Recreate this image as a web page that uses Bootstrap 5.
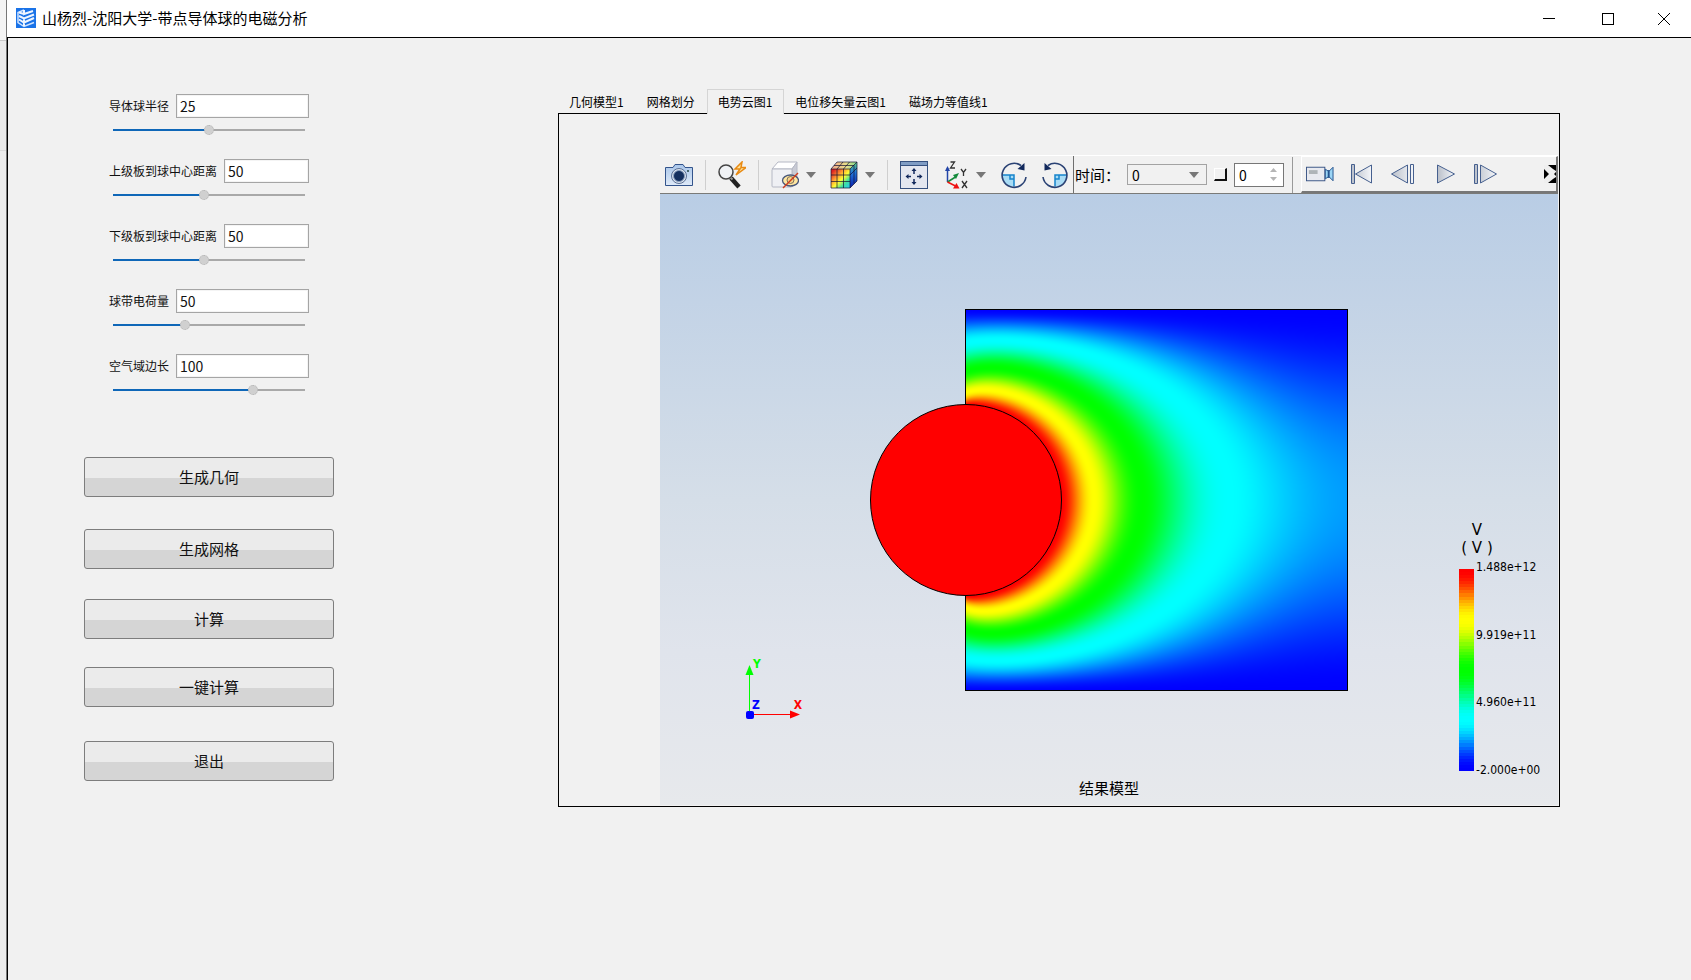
<!DOCTYPE html>
<html lang="zh-CN">
<head>
<meta charset="utf-8">
<meta name="viewport" content="width=device-width, initial-scale=1">
<title>山杨烈-沈阳大学-带点导体球的电磁分析</title>
<link href="https://cdn.jsdelivr.net/npm/bootstrap@5.3.0/dist/css/bootstrap.min.css" rel="stylesheet">
<style>
:root { --face: #f1f1f1; --cjk: "Noto Sans CJK SC", "Liberation Sans", sans-serif; }
body { font-family: var(--cjk); font-size: 15px; color: #000; background: var(--face); line-height: 20px; }
button, input, select { font-family: inherit; color: #000; }
.desk-edge { width: 7px; background: linear-gradient(#f4f4f4 40px, #c9c9c9 40px, #c9c9c9 41px, #ebebeb 41px, #ebebeb 150px, #dadada 150px, #dadada 151px, #ececec 151px); border-right: 1px solid #777; }
.app-title { height: 38px; background: #fff; border-bottom: 1px solid #000; padding: 0 0 2px 9px; }
.app-title h1 { font-size: 15px; line-height: 20px; font-weight: 400; padding-left: 6px; }
.win-btn { width: 59px; height: 34px; border: 0; background: none; padding: 0; }
.win-btn:last-child { width: 54px; }
.app-main { border-left: 1px solid #000; }
.side { width: 550px; padding: 56px 0 0 76px; }
.params { padding-left: 25px; width: 225px; }
.param { height: 65px; }
.param-line { gap: 7px; }
.param label { font-size: 12px; line-height: 24px; white-space: nowrap; color: #111; }
.param .form-control { height: 24px; border: 1px solid #a5a5a5; border-radius: 0; padding: 0 3px; font-size: 14px; line-height: 20px; box-shadow: inset 0 0 0 1px #f4f4f4; color: #111; }
.slide { appearance: none; -webkit-appearance: none; display: block; height: 12px; width: 192px; margin: 6px 0 0 4px; background: linear-gradient(to right, #0f67b8 var(--v), #a9a9a9 var(--v)) center / 100% 2px no-repeat; }
.slide::-webkit-slider-thumb { -webkit-appearance: none; width: 10px; height: 10px; border-radius: 50%; background: #d0d0d0; border: 1px dotted #b2b2b2; }
.actions { display: grid; grid-template-rows: 72px 70px 68px 74px 40px; width: 250px; margin-top: 38px; }
.actions .btn { height: 40px; padding: 0; font-size: 15px; border: 1px solid #7d7d7d; border-radius: 3px; color: #111; background: linear-gradient(#ebebeb 20px, #d5d5d5 20px); }
.results { padding: 51px 131px 0 0; min-width: 0; }
.result-tabs { border: 0; padding-left: 0; flex-wrap: nowrap; }
.result-tabs .nav-link { font-size: 12px; line-height: 16px; height: 24px; padding: 4px 11px 3px 10px; border: 1px solid transparent; border-bottom: 0; border-radius: 0; color: #000; white-space: nowrap; }
.result-tabs .nav-link.active { color: #000; background: var(--face); border-color: #d5d5d5; height: 25px; }
.result-tabs .nav-item { height: 24px; position: relative; z-index: 1; }
.result-frame { border: 1px solid #000; padding: 41px 1px 1px 101px; }
.tools { height: 39px; border-top: 1px solid #fff; border-bottom: 1px solid #7a7a78; background: var(--face); padding-left: 5px; }
.tool { width: 28px; height: 30px; padding: 0; border: 0; background: none; flex: none; display: flex; align-items: center; }
.drop { width: 10px; height: 30px; padding: 0; border: 0; background: none; flex: none; display: flex; align-items: center; margin: 0 14px 0 7px; }
.drop-last { margin: 0 0 0 7px; }
.drop-near { margin-left: 4px; }
.rule { width: 1px; height: 30px; background: #cfcfcf; margin: 0 12px; flex: none; }
.turn { margin-left: 13px; }
.timebar { border-left: 1px solid #6f6f6f; height: 37px; padding-left: 1px; margin-left: 4px; white-space: nowrap; }
.time-pick { width: 80px; height: 21px; border: 1px solid #a3a3a3; background: var(--face); appearance: none; font-size: 14px; line-height: 18px; padding: 0 4px; display: block; }
.pick-wrap > svg { position: absolute; right: 8px; top: 8px; pointer-events: none; }
.tick { appearance: none; width: 13px; height: 13px; border: solid; border-width: 1px 2px 2px 1px; border-color: #fff #111 #111 #fff; margin: 0 7px; }
.spin { width: 50px; height: 24px; border: 1px solid #777; background: #fff; padding: 0 6px 0 4px; }
.spin input { width: 26px; border: 0; padding: 0; font-size: 14px; line-height: 18px; appearance: textfield; -moz-appearance: textfield; background: none; }
.spin input::-webkit-inner-spin-button { -webkit-appearance: none; }
.player { border: solid; border-width: 1px 2px 2px 1px; border-color: #fff #777 #777 #fff; height: 37px; margin-left: 8px; padding-left: 4px; gap: 13px; min-width: 0; }
.view3d { height: 611px; background: linear-gradient(#b9cde5, #d5dee8 50%, #e0e4ec 75%, #e7e9ec); }
.model { position: relative; width: 478px; height: 384px; }
.model canvas { position: absolute; left: 96px; top: 1px; }
.model svg { position: absolute; inset: 0; }
.caption3d { position: absolute; left: 0; right: 0; bottom: 7px; text-align: center; }
.triad { position: absolute; left: 80px; bottom: 80px; font: bold 12px "DejaVu Sans Condensed", "DejaVu Sans", sans-serif; }
.legend3d { position: absolute; right: 15px; bottom: 34px; width: 84px; font: 12px/14px "DejaVu Sans Condensed", "DejaVu Sans", sans-serif; }
.legend3d .unit { width: 36px; font: 15px/18px "DejaVu Sans", var(--cjk); text-align: center; margin-bottom: 12px; white-space: nowrap; }
.legend3d canvas { width: 15px; height: 202px; image-rendering: pixelated; }
.ticks { margin: -9px 0 -6px 2px; }
</style>
</head>
<body>
<svg width="0" height="0" class="position-absolute" aria-hidden="true">
  <defs>
    <linearGradient id="steel" x1="0" x2="1"><stop offset="0" stop-color="#b9bfc9"/><stop offset="1" stop-color="#f4f6fa"/></linearGradient>
    <linearGradient id="sky" x1="0" x2="0" y1="0" y2="1"><stop offset="0" stop-color="#a9c6ea"/><stop offset="1" stop-color="#dfeaf8"/></linearGradient>
    <linearGradient id="heat" x1="0" y1="0" x2="1" y2="1"><stop offset=".1" stop-color="#d22"/><stop offset=".35" stop-color="#f93"/><stop offset=".55" stop-color="#ff3"/><stop offset=".75" stop-color="#3ee0a0"/><stop offset="1" stop-color="#22c8f5"/></linearGradient>
    <linearGradient id="heatTop" x1="0" x2="1"><stop offset="0" stop-color="#f2a38a"/><stop offset=".6" stop-color="#e8e08a"/><stop offset="1" stop-color="#7bd88a"/></linearGradient>
    <linearGradient id="heatSide" x1="0" y1="0" x2="0" y2="1"><stop offset="0" stop-color="#5fd07a"/><stop offset=".4" stop-color="#2176d8"/><stop offset="1" stop-color="#0a1fae"/></linearGradient>
  </defs>
</svg>
<div class="d-flex min-vh-100">
  <div class="desk-edge flex-shrink-0"></div>
  <div class="flex-grow-1 d-flex flex-column" style="min-width:0">
    <header class="app-title d-flex align-items-center">
      <svg width="20" height="20" viewBox="0 0 20 20" aria-hidden="true">
        <rect width="20" height="20" fill="#1a73e8"/>
        <path d="M8 2 2 4.500v10l6 4 10-4" fill="none" stroke="#cfe3ff" stroke-width="1.500"/>
        <path d="M8 2v4l9-3M8 6 3 4.500M3 8l5 2.500 10-4M3 11.500l5 3 10-4.500M8 10v8" fill="none" stroke="#eef5ff" stroke-width="2"/>
      </svg>
      <h1 class="m-0 flex-grow-1">山杨烈-沈阳大学-带点导体球的电磁分析</h1>
      <button class="win-btn" aria-label="最小化"><svg width="12" height="12"><path d="M0 5.500h12" stroke="#000"/></svg></button>
      <button class="win-btn" aria-label="最大化"><svg width="12" height="12"><rect x=".5" y=".5" width="11" height="11" fill="none" stroke="#000"/></svg></button>
      <button class="win-btn" aria-label="关闭"><svg width="12" height="12"><path d="M0 0l12 12M12 0 0 12" stroke="#000"/></svg></button>
    </header>
    <main class="app-main d-flex flex-grow-1">
      <section class="side flex-shrink-0">
        <div class="params">
          <div class="param"><div class="param-line d-flex"><label for="p1">导体球半径</label><input id="p1" class="form-control" value="25"></div><input type="range" class="slide" aria-label="导体球半径" value="50" style="--v:50%"></div>
          <div class="param"><div class="param-line d-flex"><label for="p2">上级板到球中心距离</label><input id="p2" class="form-control" value="50"></div><input type="range" class="slide" aria-label="上级板到球中心距离" value="47" style="--v:47%"></div>
          <div class="param"><div class="param-line d-flex"><label for="p3">下级板到球中心距离</label><input id="p3" class="form-control" value="50"></div><input type="range" class="slide" aria-label="下级板到球中心距离" value="47" style="--v:47%"></div>
          <div class="param"><div class="param-line d-flex"><label for="p4">球带电荷量</label><input id="p4" class="form-control" value="50"></div><input type="range" class="slide" aria-label="球带电荷量" value="37" style="--v:37%"></div>
          <div class="param"><div class="param-line d-flex"><label for="p5">空气域边长</label><input id="p5" class="form-control" value="100"></div><input type="range" class="slide" aria-label="空气域边长" value="74" style="--v:74%"></div>
        </div>
        <div class="actions">
          <button class="btn">生成几何</button>
          <button class="btn">生成网格</button>
          <button class="btn">计算</button>
          <button class="btn">一键计算</button>
          <button class="btn">退出</button>
        </div>
      </section>
      <section class="results flex-grow-1">
        <ul class="nav nav-tabs result-tabs">
          <li class="nav-item"><a class="nav-link" href="#geo">几何模型1</a></li>
          <li class="nav-item"><a class="nav-link" href="#mesh">网格划分</a></li>
          <li class="nav-item"><a class="nav-link active" aria-current="page" href="#volt">电势云图1</a></li>
          <li class="nav-item"><a class="nav-link" href="#disp">电位移矢量云图1</a></li>
          <li class="nav-item"><a class="nav-link" href="#iso">磁场力等值线1</a></li>
        </ul>
        <div class="result-frame">
          <div class="tools d-flex align-items-center">
            <button class="tool" aria-label="截图"><svg width="28" height="24" viewBox="0 0 28 24"><path d="M.5 4.500H8l2-3h8l2 3h7.500v18H.5z" fill="url(#sky)" stroke="#33548c"/><circle cx="14" cy="13" r="7.500" fill="#dce4ee" stroke="#5b7095"/><circle cx="14" cy="13" r="5.500" fill="#15305f" stroke="#8aa0c0"/><circle cx="23" cy="8" r="1" fill="#244"/></svg></button>
            <span class="rule"></span>
            <button class="tool" aria-label="缩放"><svg width="28" height="28" viewBox="0 0 28 28"><path d="M13 17l8 9" stroke="#222" stroke-width="4.500"/><path d="M11.500 15.500l3 3" stroke="#999" stroke-width="2"/><circle cx="8" cy="11" r="7" fill="#f0f2f5" stroke="#444" stroke-width="1.500"/><path d="M24 1l-7 7h5l-4 6 10-7.500h-5z" fill="#ffe29a" stroke="#e88a13" stroke-width="1.500"/></svg></button>
            <span class="rule"></span>
            <button class="tool" aria-label="显示隐藏"><svg width="28" height="28" viewBox="0 0 28 28"><path d="M1 8l6-7h19l-5 7z" fill="#fff" stroke="#b5b8c4"/><path d="M21 8l5-7v18l-5 7z" fill="#c9cbd5" stroke="#b5b8c4"/><rect x="1" y="8" width="20" height="18" rx="1" fill="#eff0f4" stroke="#b5b8c4"/><ellipse cx="19.500" cy="19.500" rx="8" ry="5.500" fill="#ffe6a0" stroke="#47567a" stroke-width="1.300"/><circle cx="19.500" cy="19" r="3.500" fill="#f3d48a" stroke="#7a6f62"/><path d="M27 12 12 27" stroke="#cf3b1c" stroke-width="1.500"/></svg></button>
            <button class="drop" aria-label="显示选项"><svg width="10" height="6"><path d="M0 0h10L5 6z" fill="#777"/></svg></button>
            <button class="tool" aria-label="云图"><svg width="28" height="28" viewBox="0 0 28 28"><path d="M1 8l6-7h20l-6 7z" fill="url(#heatTop)"/><path d="M20 8l7-7v19l-7 7z" fill="url(#heatSide)"/><rect x="1" y="8" width="19" height="19" fill="url(#heat)"/><path d="M1 8l6-7h20v19l-7 7H1zM1 8h19v19M7 8v19M13.500 8v19M1 14h19l7-7M1 20.500h19M7 8l6-7M13.500 8l6-7M20 8l7-7M4 4.500h20v18" fill="none" stroke="#113" stroke-opacity=".7"/></svg></button>
            <button class="drop drop-last" aria-label="云图选项"><svg width="10" height="6"><path d="M0 0h10L5 6z" fill="#777"/></svg></button>
            <span class="rule"></span>
            <button class="tool" aria-label="适应窗口"><svg width="28" height="28" viewBox="0 0 28 28"><rect x=".5" y=".5" width="27" height="27" fill="#e4e7f0" stroke="#35507f"/><path d="M1 1h26v3H1z" fill="#7f9cc4"/><path d="M1 4.500h26" stroke="#35507f"/><path d="M14 13V9M14 18v4M11 15.500H7M17 15.500h4" stroke="#12295c" stroke-width="1.500"/><path d="M11.500 10 14 7l2.500 3zM11.500 21l2.500 3 2.500-3zM8.500 13l-3 2.500 3 2.500zM19.500 13l3 2.500-3 2.500z" fill="#12295c"/></svg></button>
            <button class="tool ms-3" aria-label="视角"><svg width="28" height="28" viewBox="0 0 28 28"><path d="M3.500 21V7" stroke="#2345a8" stroke-width="1.500"/><path d="M1 10l2.500-5L6 10z" fill="#2345a8"/><path d="M3.500 21l8-5" stroke="#138a3a" stroke-width="1.500"/><path d="M9 14l6-2-3 6z" fill="#138a3a"/><path d="M3.500 21l8 4" stroke="#e11" stroke-width="1.500"/><path d="M12.500 22l3 5.500H9z" fill="#e11"/><path d="M6.500 1h4l-4 6h4.500M17 8l2.500 3.500L22 8M19.500 11.500V15M18 20l5 7M23 20l-5 7" fill="none" stroke="#333" stroke-width="1.300"/></svg></button>
            <button class="drop drop-near" aria-label="视角选项"><svg width="10" height="6"><path d="M0 0h10L5 6z" fill="#777"/></svg></button>
            <button class="tool" aria-label="顺时针旋转"><svg width="28" height="28" viewBox="0 0 28 28"><path d="M2 14h12v11.500A12 12 0 0 1 2 14z" fill="#a9dcf5"/><path d="M2 14h12v11.500M10 14v4h4" fill="none" stroke="#1684cc" stroke-width="1.500"/><path d="M21 4.500A12 12 0 1 0 26 16" fill="none" stroke="#2a4274" stroke-width="1.600"/><path d="M24.500 2v7.500L17.500 8z" fill="#12295c"/></svg></button>
            <button class="tool turn" aria-label="逆时针旋转"><svg width="28" height="28" viewBox="0 0 28 28"><path d="M14 14h12a12 12 0 0 1-12 11.500z" fill="#a9dcf5"/><path d="M26 14H14v11.500M18 14v4h-4" fill="none" stroke="#1684cc" stroke-width="1.500"/><path d="M7 4.500A12 12 0 1 1 2 16" fill="none" stroke="#2a4274" stroke-width="1.600"/><path d="M3.500 2v7.500L10.500 8z" fill="#12295c"/></svg></button>
            <div class="timebar d-flex align-items-center">
              <label for="tm" style="width:52px">时间：</label>
              <div class="pick-wrap position-relative"><select id="tm" class="time-pick"><option>0</option></select><svg width="10" height="6"><path d="M0 0h10L5 6z" fill="#777"/></svg></div>
              <input type="checkbox" class="tick" aria-label="循环">
              <div class="spin d-flex align-items-center justify-content-between"><input type="number" value="0" aria-label="帧"><svg width="7" height="13"><path d="M0 4l3.500-4L7 4zM0 9h7l-3.500 4z" fill="#b5b5b5"/></svg></div>
              <span class="ms-2" style="width:1px;height:36px;background:#999"></span>
            </div>
            <div class="player d-flex align-items-center flex-grow-1">
              <button class="tool" aria-label="录像"><svg width="29" height="18" viewBox="0 0 29 18"><rect x=".5" y="2" width="19" height="14" fill="#e8eaf0" stroke="#3c5686"/><rect x="3" y="5" width="9" height="4" fill="#aeb4b8"/><path d="M20 4l3 2h1l4-4v14l-4-4h-1l-3 2z" fill="#9bd5f5" stroke="#24538e"/><path d="M23.500 5v8" stroke="#24538e" stroke-width="2"/></svg></button>
              <button class="tool" aria-label="第一帧"><svg width="28" height="20" viewBox="0 0 28 20"><path d="M4.500.5h3v19h-3zM24.500 1v18L8.500 10z" fill="url(#steel)" stroke="#46608f"/></svg></button>
              <button class="tool" aria-label="上一帧"><svg width="28" height="20" viewBox="0 0 28 20"><path d="M19.500 1v18L3.500 10zM22.500.5h3v19h-3z" fill="url(#steel)" stroke="#46608f"/></svg></button>
              <button class="tool" aria-label="播放"><svg width="28" height="20" viewBox="0 0 28 20"><path d="M8.500 1v18l17-9z" fill="url(#steel)" stroke="#46608f"/></svg></button>
              <button class="tool" aria-label="下一帧"><svg width="28" height="20" viewBox="0 0 28 20"><path d="M4.500.5h3v19h-3zM10.500 1v18l16-9z" fill="url(#steel)" stroke="#46608f"/></svg></button>
              <button class="tool ms-auto justify-content-end" aria-label="更多"><svg width="12" height="18"><path d="M0 0h12v18H0z" fill="#eee"/><path d="M4 0h8v6L9 4zM0 4l5 5-5 5zM4 18h8v-6l-3 2zM12 7v4l-2-2z" fill="#000"/></svg></button>
            </div>
          </div>
          <div class="view3d position-relative d-flex align-items-center justify-content-center">
            <div class="model">
              <canvas id="field" width="382" height="382" role="img" aria-label="电势分布"></canvas>
              <svg width="478" height="384"><rect x="95.500" y="1.500" width="382" height="381" fill="none" stroke="#000"/><circle cx="96" cy="192" r="95.500" fill="#f00" stroke="#000"/></svg>
            </div>
            <svg class="triad" width="66" height="70"><path d="M9.500 60V16" stroke="#0f0"/><path d="M5.500 20l4-10 4 10z" fill="#0f0"/><path d="M10 59.500h43" stroke="#f00"/><path d="M50 55.500l10 4-10 4z" fill="#f00"/><rect x="6" y="56" width="8" height="8" rx="2" fill="#00f"/><text x="13" y="13" fill="#0f0">Y</text><text x="12" y="54" fill="#00f">Z</text><text x="62" y="54" text-anchor="end" fill="#f00">X</text></svg>
            <div class="legend3d">
              <div class="unit"><div>V</div><div>( V )</div></div>
              <div class="d-flex">
                <canvas id="scale" width="1" height="66"></canvas>
                <div class="ticks d-flex flex-column justify-content-between"><span>1.488e+12</span><span>9.919e+11</span><span>4.960e+11</span><span>-2.000e+00</span></div>
              </div>
            </div>
            <div class="caption3d">结果模型</div>
          </div>
        </div>
      </section>
    </main>
  </div>
</div>
<script src="https://cdn.jsdelivr.net/npm/bootstrap@5.3.0/dist/js/bootstrap.bundle.min.js"></script>
<script>
// Contour palette: blue, cyan, green, yellow, red with eased transitions.
const stops = [[0,0,255],[0,255,255],[0,255,0],[255,255,0],[255,0,0]];
function colour(v) {
  const s = Math.min(3.9999, Math.max(0, v * 4)), i = Math.floor(s), t = s - i, e = t * t * (3 - 2 * t);
  return stops[i].map((c, k) => Math.round(c + (stops[i + 1][k] - c) * e));
}
const bar = document.getElementById('scale').getContext('2d');
for (let i = 0; i < 66; i++) { bar.fillStyle = `rgb(${colour(1 - i / 65)})`; bar.fillRect(0, i, 1, 1); }

// Potential around a charged disc between two grounded plates:
// Laplace's equation on the upper half, over-relaxed; open left and right sides.
const N = 382, H = 191, R = 95.5, W = N + 1, V = new Float64Array(W * (H + 1)), q = Math.PI / (8 * R);
const solid = new Uint8Array(W * (H + 1));
for (let j = 0; j <= H; j++) for (let i = 0; i <= N; i++) {
  const p = j * W + i;
  if (i * i + j * j <= R * R) { solid[p] = 1; V[p] = 1; }
  else if (j < H) {
    const a = Math.cosh(2 * q * i), b = Math.cos(2 * q * j);
    V[p] = Math.min(1, 0.5 * Math.log((a + b) / (a - b)) / 0.95);
  }
}
const leakLeft = 0.7, leakRight = 0.5;
for (let n = 0; n < 500; n++) for (let j = 0; j < H; j++) for (let i = 0; i <= N; i++) {
  const p = j * W + i;
  if (solid[p]) continue;
  const up = V[p + W], down = j ? V[p - W] : V[p + W];
  let sum, d = 4;
  if (i === 0 || i === N) {
    sum = up + down + 2 * V[i ? p - 1 : p + 1];
    d += 2 * (i ? leakRight : leakLeft) / Math.hypot(i, j);
  } else sum = up + down + V[p - 1] + V[p + 1];
  V[p] += 1.96 * (sum / d - V[p]);
}
const g = document.getElementById('field').getContext('2d'), img = g.createImageData(N, N);
for (let y = 0; y < N; y++) for (let x = 0; x < N; x++) {
  const c = colour(V[Math.min(H, Math.abs(y - H)) * W + x]), o = (y * N + x) * 4;
  img.data[o] = c[0]; img.data[o + 1] = c[1]; img.data[o + 2] = c[2]; img.data[o + 3] = 255;
}
g.putImageData(img, 0, 0);
// Keep each slider's filled part in step with its value.
document.querySelectorAll('.slide').forEach(s => s.addEventListener('input', () => s.style.setProperty('--v', s.value + '%')));
</script>
</body>
</html>
